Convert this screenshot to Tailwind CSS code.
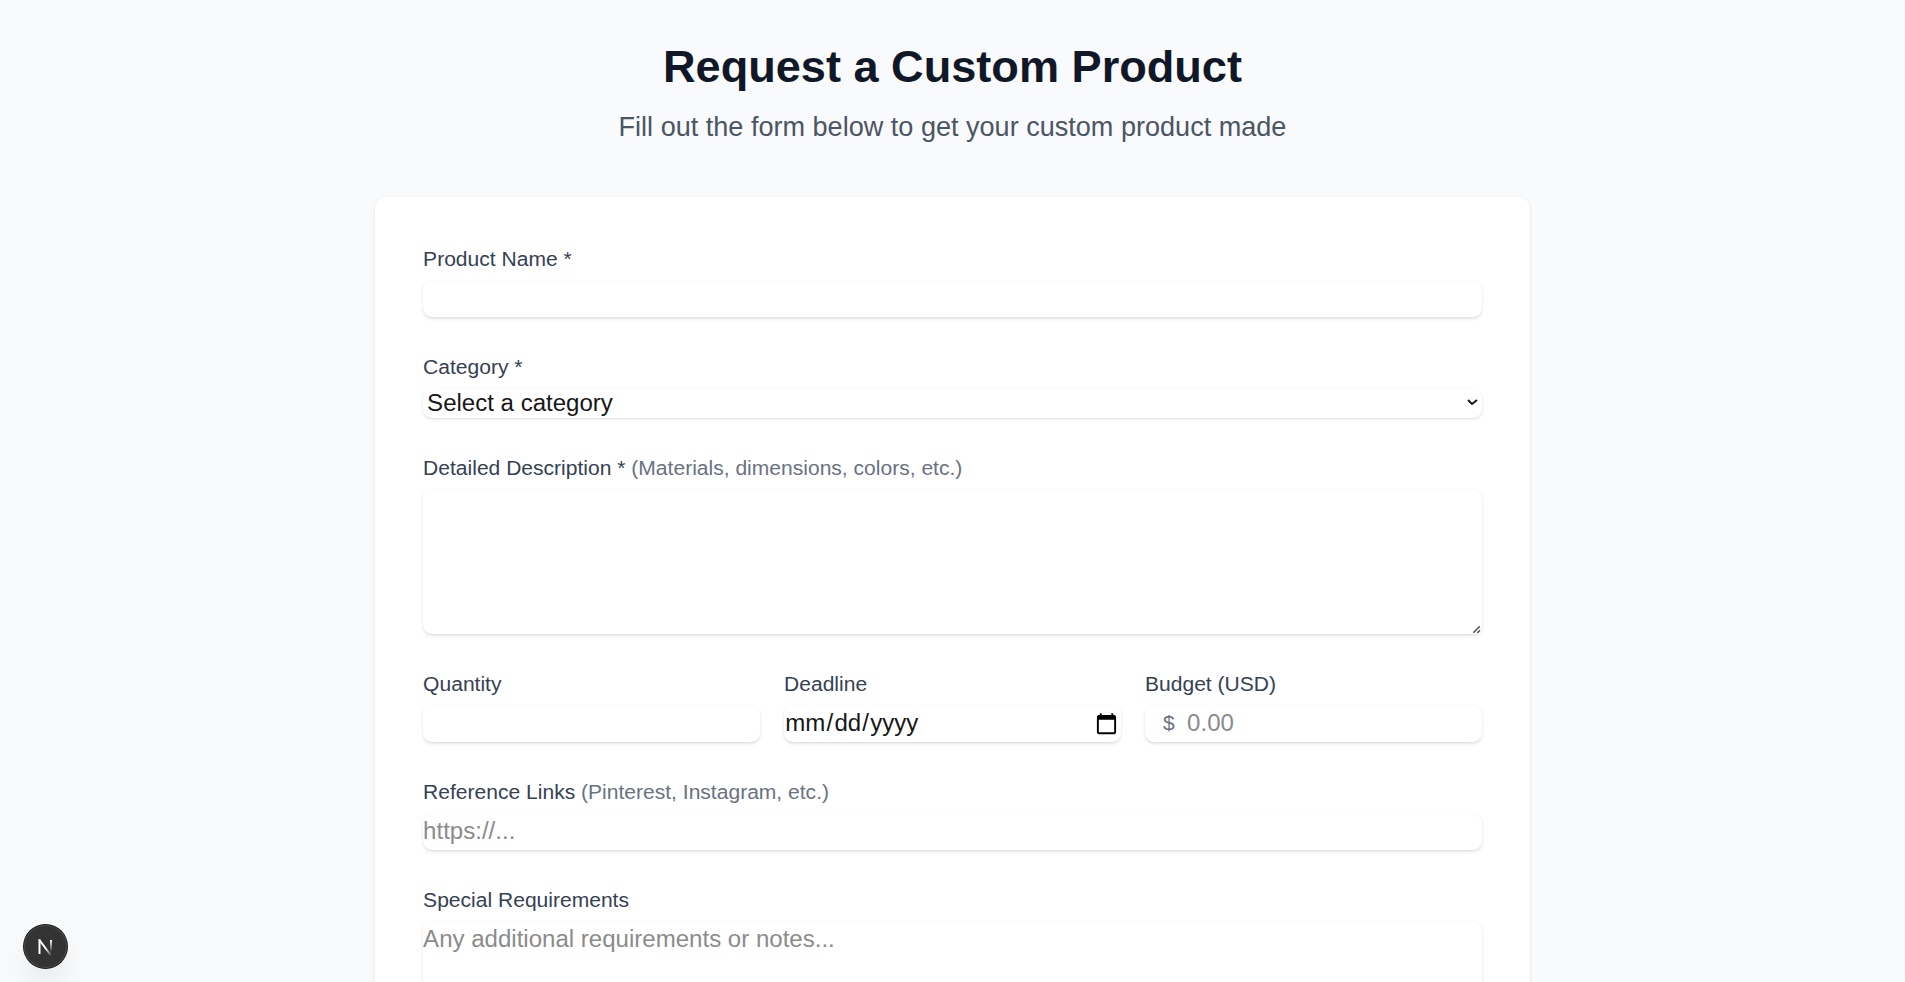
<!DOCTYPE html>
<html lang="en" class="text-[20px]">
<head>
<meta charset="utf-8">
<title>Request a Custom Product</title>
<script src="https://cdn.jsdelivr.net/npm/@tailwindcss/browser@4"></script>
</head>
<body class="h-screen overflow-hidden bg-gray-50 font-['Liberation_Sans',Arial,sans-serif] text-[#171717]">
<main class="mx-auto w-[960px] pt-[33.200px] text-[20px] leading-[30px] [zoom:1.2032]">
  <header class="mb-[40.400px] text-center">
    <h1 class="text-[37.500px] leading-[45px] font-bold text-gray-900">Request a Custom Product</h1>
    <p class="mt-[10px] text-[22.500px] leading-[35px] text-gray-600">Fill out the form below to get your custom product made</p>
  </header>
  <form class="flex flex-col gap-[29.900px] rounded-[10px] bg-white p-[40px] pt-[39.700px] shadow-sm">
    <div>
      <label for="name" class="block text-[17.500px] leading-[24px] text-gray-700">Product Name *</label>
      <input id="name" type="text" class="mt-[5.900px] block h-[30px] w-full rounded-[7.500px] shadow-sm">
    </div>
    <div>
      <label for="category" class="block text-[17.500px] leading-[24px] text-gray-700">Category *</label>
      <div class="mt-[5.900px] flex h-[24.200px] items-start rounded-[7.500px] shadow-sm">
        <select id="category" class="-mt-[0.600px] block w-full rounded-[7.500px] bg-transparent"><option>Select a category</option></select>
      </div>
    </div>
    <div>
      <label for="description" class="block text-[17.500px] leading-[24px] text-gray-700">Detailed Description * <span class="text-gray-500">(Materials, dimensions, colors, etc.)</span></label>
      <div class="relative mt-[5.900px]">
        <textarea id="description" rows="4" class="block w-full resize-none rounded-[7.500px] shadow-sm"></textarea>
        <svg class="pointer-events-none absolute right-[1.700px] bottom-[0.800px] size-[5.900px]" viewBox="0 0 7 7" fill="none" stroke="#505050" stroke-width="1.400"><path d="M0.300 6.700L6.700 0.300M4.200 6.800L6.800 4.200"/></svg>
      </div>
    </div>
    <div class="grid grid-cols-3 gap-[20px]">
      <div>
        <label for="quantity" class="block text-[17.500px] leading-[24px] text-gray-700">Quantity</label>
        <input id="quantity" type="number" class="mt-[5.900px] block h-[30px] w-full rounded-[7.500px] shadow-sm">
      </div>
      <div>
        <label for="deadline" class="block text-[17.500px] leading-[24px] text-gray-700">Deadline</label>
        <input id="deadline" type="date" class="mt-[5.900px] block h-[30px] w-full rounded-[7.500px] pb-[1px] shadow-sm [&::-webkit-calendar-picker-indicator]:translate-y-[1px]">
      </div>
      <div>
        <label for="budget" class="block text-[17.500px] leading-[24px] text-gray-700">Budget (USD)</label>
        <div class="relative mt-[5.900px] rounded-[7.500px] shadow-sm">
          <span class="pointer-events-none absolute inset-y-0 left-0 flex items-center pb-[1px] pl-[15px] text-[17.500px] text-gray-500">$</span>
          <input id="budget" type="number" placeholder="0.00" class="block h-[30px] w-full rounded-[7.500px] pr-[15px] pb-[1px] pl-[35px] placeholder:text-[#8b8b8b]">
        </div>
      </div>
    </div>
    <div>
      <label for="links" class="block text-[17.500px] leading-[24px] text-gray-700">Reference Links <span class="text-gray-500">(Pinterest, Instagram, etc.)</span></label>
      <input id="links" type="url" placeholder="https://..." class="mt-[5.900px] block h-[30px] w-full rounded-[7.500px] pb-[1px] shadow-sm placeholder:text-[#8b8b8b]">
    </div>
    <div>
      <label for="special" class="block text-[17.500px] leading-[24px] text-gray-700">Special Requirements</label>
      <textarea id="special" rows="3" placeholder="Any additional requirements or notes..." class="mt-[5.900px] block w-full rounded-[7.500px] leading-[29px] shadow-sm placeholder:text-[#8b8b8b]"></textarea>
    </div>
  </form>
</main>
<button type="button" aria-label="Open developer tools" class="fixed bottom-[14px] left-[24px] size-[43px] rounded-full bg-[#333] shadow-[0_0_0_1px_#171717,inset_0_0_0_1px_#4a4a4a,0_16px_32px_-8px_rgba(0,0,0,0.16)]">
  <svg class="size-[43px]" viewBox="0 0 43 43" fill="none">
    <defs>
      <linearGradient id="stem" x1="0" y1="15" x2="0" y2="27" gradientUnits="userSpaceOnUse"><stop stop-color="#fff"/><stop offset="1" stop-color="#fff" stop-opacity="0"/></linearGradient>
      <linearGradient id="diag" x1="22" y1="23" x2="28" y2="31" gradientUnits="userSpaceOnUse"><stop stop-color="#fff"/><stop offset="1" stop-color="#fff" stop-opacity="0"/></linearGradient>
    </defs>
    <path d="M15.500 29V14.500" stroke="#fff" stroke-width="2"/>
    <path d="M15 14.500L27 30.500" stroke="url(#diag)" stroke-width="2"/>
    <path d="M27 15V27" stroke="url(#stem)" stroke-width="2"/>
  </svg>
</button>
</body>
</html>
